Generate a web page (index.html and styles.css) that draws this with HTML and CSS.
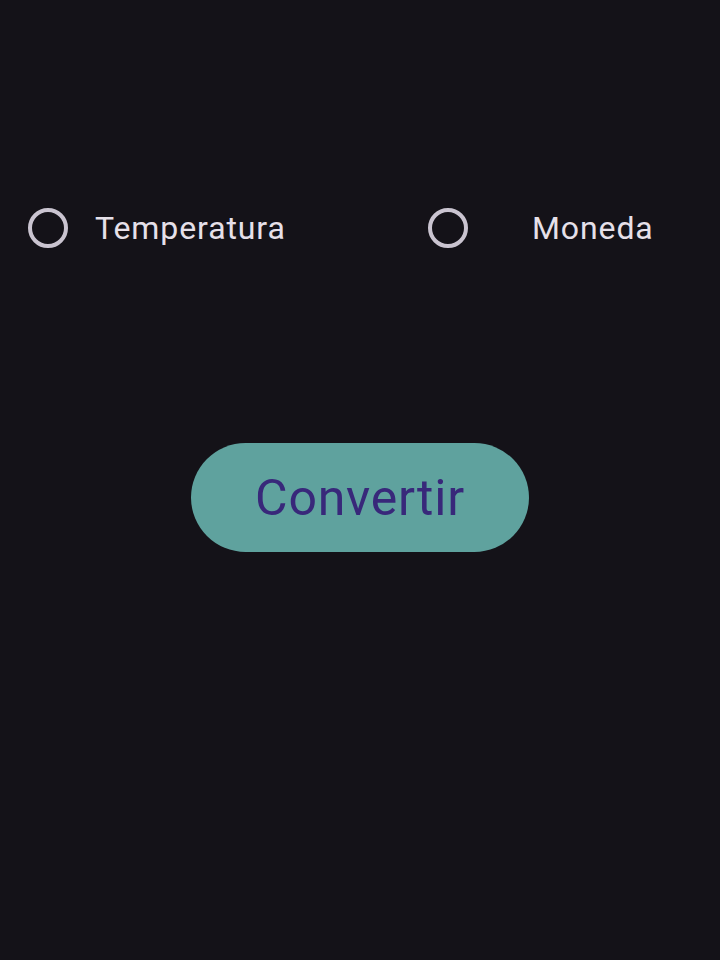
FILE: index.html
```html
<!DOCTYPE html>
<html>
<head>
<meta charset="UTF-8">
<title>Conversor</title>
<meta name="viewport" content="width=device-width, initial-scale=1.0">
<link rel="stylesheet" href="styles.css">
</head>
<body>

<!-- TIPO DE CONVERSION -->
<div class="options">
  <label class="opt">
    <input type="radio" name="tipo">
    <span class="ring"></span>
    <span class="lbl">Temperatura</span>
  </label>
  <label class="opt">
    <input type="radio" name="tipo">
    <span class="ring"></span>
    <span class="lbl center">Moneda</span>
  </label>
</div>

<!-- BOTON -->
<div class="actions">
  <button class="convert">Convertir</button>
</div>

</body>
</html>
```

FILE: styles.css
```css
body{
  margin:0; min-height:100vh;
  background:#141218;
  font-family:Roboto,"Noto Sans",Arial,sans-serif; color:#e6e0e9;
}
.options{
  display:grid; grid-template-columns:400px 320px;
  padding-top:204px;
}
.opt{
  display:flex; align-items:center;
  height:48px; padding-left:28px; cursor:pointer;
}
.opt input{display:none}
.ring{
  width:32px; height:32px; flex:none;
  border:4px solid #cac4d0; border-radius:50%;
}
.lbl{font-size:32px; margin-left:27px; line-height:48px; letter-spacing:0.9px}
.lbl.center{margin-left:64px}

.actions{
  display:flex; justify-content:center;
  margin-top:191px;
}
.convert{
  width:338px; height:109px;
  border:none; border-radius:55px;
  background:#5fa29e; color:#38287a;
  font-family:Roboto,"Noto Sans",Arial,sans-serif;
  font-size:50px; padding:0; letter-spacing:0.8px;
}
```
